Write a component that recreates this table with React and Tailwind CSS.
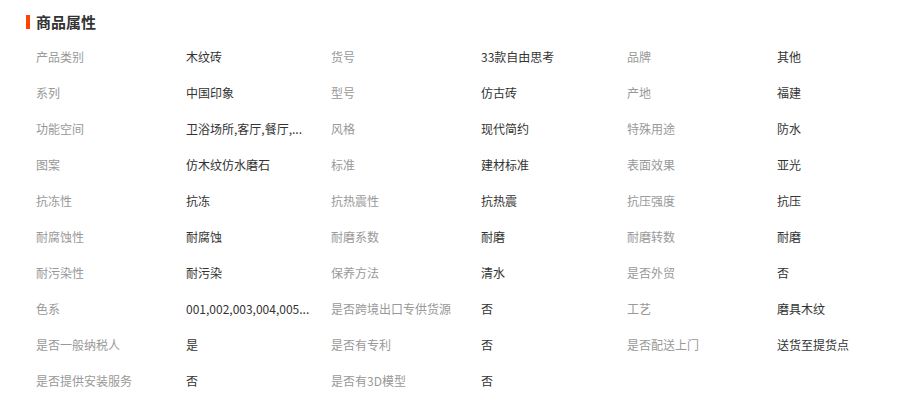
const ATTRS = [
  ['产品类别', '木纹砖'], ['货号', '33款自由思考'], ['品牌', '其他'],
  ['系列', '中国印象'], ['型号', '仿古砖'], ['产地', '福建'],
  ['功能空间', '卫浴场所,客厅,餐厅,...'], ['风格', '现代简约'], ['特殊用途', '防水'],
  ['图案', '仿木纹仿水磨石'], ['标准', '建材标准'], ['表面效果', '亚光'],
  ['抗冻性', '抗冻'], ['抗热震性', '抗热震'], ['抗压强度', '抗压'],
  ['耐腐蚀性', '耐腐蚀'], ['耐磨系数', '耐磨'], ['耐磨转数', '耐磨'],
  ['耐污染性', '耐污染'], ['保养方法', '清水'], ['是否外贸', '否'],
  ['色系', '001,002,003,004,005...'], ['是否跨境出口专供货源', '否'], ['工艺', '磨具木纹'],
  ['是否一般纳税人', '是'], ['是否有专利', '否'], ['是否配送上门', '送货至提货点'],
  ['是否提供安装服务', '否'], ['是否有3D模型', '否'],
]

export default function App() {
  return (
    <div
      className="w-[905px] h-[393px] bg-white overflow-hidden"
      style={{ fontFamily: '"Noto Sans CJK SC", "Noto Sans", sans-serif' }}
    >
      {/* Title */}
      <div className="flex items-center h-[39px] pl-[26px] pt-[4px]">
        <span className="w-[4px] h-[14px] bg-[#ff4400] mr-[6px]" />
        <span className="text-[15px] font-bold text-[#333] leading-none">商品属性</span>
      </div>

      {/* Attributes */}
      <div className="grid grid-cols-[295px_296px_296px] pl-[36px]">
        {ATTRS.map(([label, value], i) => (
          <div key={i} className="flex items-center h-[36px] text-[12px] leading-none">
            <span className="w-[150px] shrink-0 text-[#999] whitespace-nowrap">{label}</span>
            <span className="text-[#333] whitespace-nowrap">{value}</span>
          </div>
        ))}
      </div>
    </div>
  )
}
